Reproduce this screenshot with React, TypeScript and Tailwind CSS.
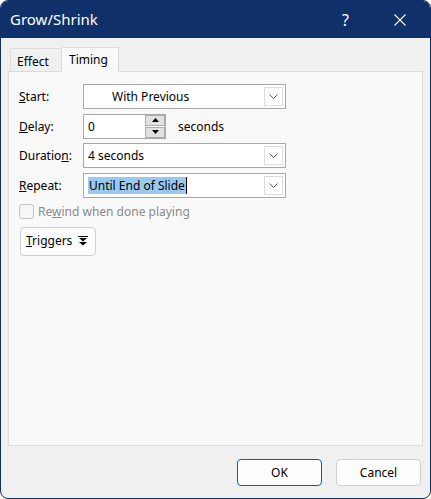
import React from "react";

function Chevron() {
  return (
    <svg width="9" height="5" viewBox="0 0 9 5" className="block">
      <path d="M0.5 0.5 L4.5 4.5 L8.5 0.5" fill="none" stroke="#606060" strokeWidth="1" />
    </svg>
  );
}

function Combo({ text, indent = false, selected = false }: { text: string; indent?: boolean; selected?: boolean }) {
  return (
    <div className="w-[203px] h-[25px] border border-[#a8a8a8] bg-white flex items-center">
      <div className={`flex-1 flex items-center pt-[1px] ${indent ? "pl-[28px]" : "pl-[4px]"}`}>
        {selected ? (
          <span className="bg-[#99c9ef] text-black leading-[17px] px-[1px] border-r border-black">{text}</span>
        ) : (
          <span>{text}</span>
        )}
      </div>
      <div className="w-[19px] h-[19px] mr-[2px] border border-[#dcdcdc] bg-white flex items-center justify-center">
        <Chevron />
      </div>
    </div>
  );
}

function Row({ label, children }: { label: React.ReactNode; children: React.ReactNode }) {
  return (
    <div className="flex items-center">
      <div className="w-[64px] pt-[1px]">{label}</div>
      {children}
    </div>
  );
}

export default function App() {
  return (
    <div
      className="w-[431px] h-[499px] bg-white text-[12px] text-black"
      style={{ fontFamily: '"Noto Sans", "Open Sans", sans-serif' }}
    >
      <div className="w-full h-full rounded-[8px] border border-[#0f2f66] bg-[#f0f0f0] overflow-hidden flex flex-col">
        {/* Title bar */}
        <div className="h-[37px] bg-[#10306a] flex items-center text-white shrink-0">
          <span className="pl-[9px] text-[15px]">Grow/Shrink</span>
          <span className="ml-auto mr-[45px] text-[16px]">?</span>
          <svg width="12" height="12" viewBox="0 0 12 12" className="mr-[24px]">
            <path d="M0.5 0.5 L11.5 11.5 M11.5 0.5 L0.5 11.5" stroke="white" strokeWidth="1.1" />
          </svg>
        </div>

        {/* Tabs */}
        <div className="flex items-end pl-[9px] pt-[9px] h-[33px] shrink-0">
          <div className="h-[23px] w-[52px] border border-b-0 border-[#dcdcdc] bg-[#f0f0f0] pl-[6px] flex items-center pt-[3px]">
            Effect
          </div>
          <div className="h-[25px] w-[57px] border border-b-0 border-l-0 border-[#dcdcdc] bg-[#f9f9f9] pl-[7px] flex items-center -mb-[1px] relative z-10">
            Timing
          </div>
        </div>

        {/* Panel */}
        <div className="mx-[7px] h-[375px] border border-[#dcdcdc] bg-[#f9f9f9] shrink-0 px-[10px] pt-[12px]">
          <div className="flex flex-col gap-[4.5px]">
            <Row label={<span><u>S</u>tart:</span>}>
              <Combo text="With Previous" indent />
            </Row>
            <Row label={<span><u>D</u>elay:</span>}>
              <div className="w-[83px] h-[25px] border border-[#a8a8a8] bg-white flex items-center">
                <span className="flex-1 pl-[4px] pt-[1px]">0</span>
                <div className="w-[20px] h-[23px] flex flex-col gap-[1px]">
                  <div className="flex-1 bg-[#e1e1e1] border border-[#adadad] flex items-center justify-center">
                    <svg width="7" height="4" viewBox="0 0 7 4"><path d="M0 4 L3.5 0 L7 4 Z" fill="#000" /></svg>
                  </div>
                  <div className="flex-1 bg-[#e1e1e1] border border-[#adadad] flex items-center justify-center">
                    <svg width="7" height="4" viewBox="0 0 7 4"><path d="M0 0 L3.5 4 L7 0 Z" fill="#000" /></svg>
                  </div>
                </div>
              </div>
              <span className="ml-[12px] pt-[1px]">seconds</span>
            </Row>
            <Row label={<span>Duratio<u>n</u>:</span>}>
              <Combo text="4 seconds" />
            </Row>
            <Row label={<span><u>R</u>epeat:</span>}>
              <Combo text="Until End of Slide" selected />
            </Row>
          </div>

          <div className="flex items-center mt-[5px] text-[#8a8a8a]">
            <div className="w-[15px] h-[15px] rounded-[3px] border border-[#c4c4c4] bg-[#f6f6f6]" />
            <span className="ml-[4px]">Re<u>w</u>ind when done playing</span>
          </div>

          <div className="mt-[6px] w-[76px] h-[29px] border border-[#d0d0d0] rounded-[4px] bg-[#fdfdfd] flex items-center pl-[5px] gap-[6px] ml-[1px]">
            <span><u>T</u>riggers</span>
            <svg width="10" height="10" viewBox="0 0 10 10">
              <path d="M0 0.5 H10" stroke="#000" strokeWidth="1" />
              <path d="M1 2 L9 2 L5 5.5 Z" fill="#000" />
              <path d="M1 6 L9 6 L5 9.5 Z" fill="#000" />
            </svg>
          </div>
        </div>

        {/* Footer buttons */}
        <div className="flex justify-end gap-[14px] pr-[9px] pt-[13px]">
          <div className="w-[85px] h-[27px] rounded-[4px] border border-[#005fb8] bg-[#fdfdfd] flex items-center justify-center">
            OK
          </div>
          <div className="w-[85px] h-[27px] rounded-[4px] border border-[#d0d0d0] bg-[#fdfdfd] flex items-center justify-center">
            Cancel
          </div>
        </div>
      </div>
    </div>
  );
}
